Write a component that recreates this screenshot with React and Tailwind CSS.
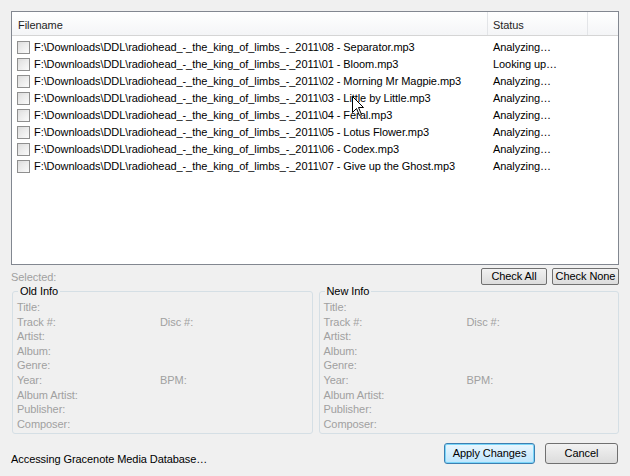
const FILES = [
  ['08 - Separator.mp3', 'Analyzing…'],
  ['01 - Bloom.mp3', 'Looking up…'],
  ['02 - Morning Mr Magpie.mp3', 'Analyzing…'],
  ['03 - Little by Little.mp3', 'Analyzing…'],
  ['04 - Feral.mp3', 'Analyzing…'],
  ['05 - Lotus Flower.mp3', 'Analyzing…'],
  ['06 - Codex.mp3', 'Analyzing…'],
  ['07 - Give up the Ghost.mp3', 'Analyzing…'],
];

const PREFIX = 'F:\\Downloads\\DDL\\radiohead_-_the_king_of_limbs_-_2011\\';

const FIELDS = [
  ['Title:', null],
  ['Track #:', 'Disc #:'],
  ['Artist:', null],
  ['Album:', null],
  ['Genre:', null],
  ['Year:', 'BPM:'],
  ['Album Artist:', null],
  ['Publisher:', null],
  ['Composer:', null],
];

function InfoGroup({ title }) {
  return (
    <div className="relative flex-1 h-[143px] mt-[6px] border border-[#d5dfe5] rounded-[3px] pt-[8px] px-[4px]">
      <div className="absolute -top-[8px] left-[5px] px-[2px] bg-[#f0f0f0] text-black leading-[15px]">{title}</div>
      {FIELDS.map(([a, b]) => (
        <div key={a} className="flex h-[14.6px] leading-[14.6px] text-[#a0a0a0]">
          <span className="w-[143px]">{a}</span>
          {b && <span>{b}</span>}
        </div>
      ))}
    </div>
  );
}

function Checkbox() {
  return (
    <div className="w-[13px] h-[13px] border border-[#8f8f8f] bg-gradient-to-br from-[#dcdcdc] to-[#fbfbfb] p-[2px] shrink-0">
      <div className="w-full h-full bg-gradient-to-br from-[#e4e4e4] to-[#f6f6f6]" />
    </div>
  );
}

export default function App() {
  return (
    <div
      className="relative w-[630px] h-[476px] bg-[#f0f0f0] pt-[11px] px-[11px] flex flex-col text-[11px] tracking-[-0.07px] text-black overflow-hidden"
      style={{ fontFamily: '"Liberation Sans", Arial, sans-serif' }}
    >
      {/* file list */}
      <div className="h-[254px] border border-[#828790] bg-white flex flex-col">
        <div className="flex h-[24px] bg-gradient-to-b from-white to-[#f4f5f7] border-b border-[#d5d5d5] text-[#1e1e1e]">
          <div className="w-[476px] px-[6px] pt-[6px] leading-[15px] border-r border-[#e3e5e8]">Filename</div>
          <div className="w-[100px] px-[5px] pt-[6px] leading-[15px] border-r border-[#e3e5e8]">Status</div>
          <div className="flex-1" />
        </div>
        <div className="pt-[3px]">
          {FILES.map(([name, status]) => (
            <div key={name} className="flex items-center h-[17px]">
              <div className="w-[476px] flex items-center pl-[5px] gap-[4px]">
                <Checkbox />
                <span className="whitespace-nowrap">{PREFIX + name}</span>
              </div>
              <div className="pl-[5px] whitespace-nowrap">{status}</div>
            </div>
          ))}
        </div>
      </div>

      {/* selected + check buttons */}
      <div className="flex items-center mt-[2px] h-[18px]">
        <span className="text-[#a0a0a0] flex-1 leading-[14px] mt-[1px]">Selected:</span>
        <button className="w-[66px] h-[17px] leading-[15px] border border-[#707070] rounded-[2px] bg-gradient-to-b from-[#f2f2f2] to-[#dcdcdc]">Check All</button>
        <button className="ml-[5px] w-[67px] h-[17px] leading-[15px] border border-[#707070] rounded-[2px] bg-gradient-to-b from-[#f2f2f2] to-[#dcdcdc]">Check None</button>
      </div>

      {/* info groups */}
      <div className="flex gap-[6px] pl-[1px]">
        <InfoGroup title="Old Info" />
        <InfoGroup title="New Info" />
      </div>

      {/* bottom bar */}
      <div className="flex items-center mt-[9px] h-[21px]">
        <span className="flex-1 mt-[11px]">Accessing Gracenote Media Database…</span>
        <button className="w-[91px] h-[21px] border border-[#3c7fb1] rounded-[3px] bg-gradient-to-b from-[#eaf6fd] to-[#bee6fd] shadow-[inset_0_0_0_1px_#7ad6f9]">Apply Changes</button>
        <button className="ml-[10px] mr-[1px] w-[73px] h-[21px] border border-[#707070] rounded-[3px] bg-gradient-to-b from-[#f2f2f2] to-[#dcdcdc]">Cancel</button>
      </div>

      {/* mouse pointer */}
      <svg className="absolute left-[352px] top-[96px]" width="13" height="21" viewBox="0 0 13 21">
        <path d="M0.5 0.5 L0.5 16.5 L4.5 12.5 L7.5 19.5 L9.5 18.5 L6.5 11.5 L11.5 11.5 Z" fill="white" stroke="black" strokeWidth="1" />
      </svg>
    </div>
  );
}
